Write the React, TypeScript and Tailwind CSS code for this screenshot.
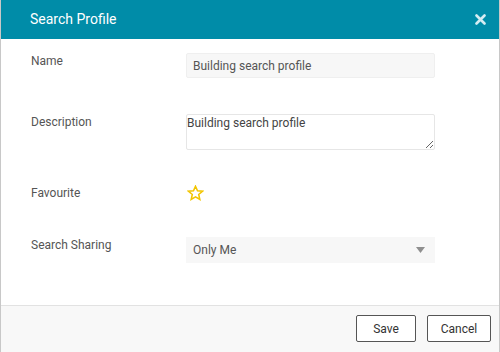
import React from "react";

const font = { fontFamily: "Roboto, 'Liberation Sans', sans-serif" };

const Row = ({
  label,
  top,
  children,
}: {
  label: string;
  top: string;
  children: React.ReactNode;
}) => (
  <div className={`flex items-start ${top}`}>
    <div className="w-[185px] pl-[30px] pt-[1px] text-[12px] leading-[15px] text-[#555]">
      {label}
    </div>
    <div className="w-[249px]">{children}</div>
  </div>
);

export default function App() {
  return (
    <div
      style={font}
      className="w-[500px] h-[352px] flex flex-col border-l border-r border-[#c8c8c8] bg-white"
    >
      <div className="h-[39px] shrink-0 bg-[#008ca8] flex items-center justify-between pl-[29px] pr-[13px]">
        <span className="text-white text-[14px]">Search Profile</span>
        <svg width="11" height="11" viewBox="0 0 11 11">
          <path
            d="M1.5 1.5 L9.5 9.5 M9.5 1.5 L1.5 9.5"
            stroke="#d4ecf2"
            strokeWidth="2.6"
            strokeLinecap="round"
          />
        </svg>
      </div>

      <div className="flex-1 flex flex-col">
        <Row label="Name" top="mt-[14px]">
          <div className="h-[25px] bg-[#f7f7f7] border border-[#efefef] rounded-[2px] flex items-center pl-[6px] text-[12px] text-[#555]">
            Building search profile
          </div>
        </Row>

        <Row label="Description" top="mt-[36px]">
          <textarea
            readOnly
            defaultValue="Building search profile"
            style={font}
            className="block w-[249px] h-[36px] border border-[#e6e6e6] rounded-[2px] bg-white px-0 pt-[1px] text-[12px] leading-[14px] text-[#444] outline-none resize"
          />
        </Row>

        <Row label="Favourite" top="mt-[35px]">
          <svg width="17" height="16" viewBox="0 0 24 23" className="ml-[1px]">
            <path
              d="M12 1.8 L14.9 8.4 L22 9 L16.6 13.7 L18.2 20.7 L12 17 L5.8 20.7 L7.4 13.7 L2 9 L9.1 8.4 Z"
              fill="none"
              stroke="#f2c500"
              strokeWidth="2.2"
              strokeLinejoin="miter"
            />
          </svg>
        </Row>

        <Row label="Search Sharing" top="mt-[36px]">
          <div className="h-[26px] bg-[#f7f7f7] flex items-center justify-between pl-[7px] pr-[10px] text-[12px] text-[#555]">
            <span>Only Me</span>
            <svg width="9" height="6" viewBox="0 0 9 6">
              <path d="M0 0 L9 0 L4.5 6 Z" fill="#8f8f8f" />
            </svg>
          </div>
        </Row>
      </div>

      <div className="h-[47px] shrink-0 border-t border-[#e2e2e2] bg-[#f8f8f8] flex justify-end items-start pt-[9px] pr-[8px] gap-[11px]">
        <button className="w-[60px] h-[27px] border border-[#555] rounded-[2px] bg-white text-[12px] text-[#333]">
          Save
        </button>
        <button className="w-[64px] h-[27px] border border-[#555] rounded-[2px] bg-white text-[12px] text-[#333]">
          Cancel
        </button>
      </div>
    </div>
  );
}
